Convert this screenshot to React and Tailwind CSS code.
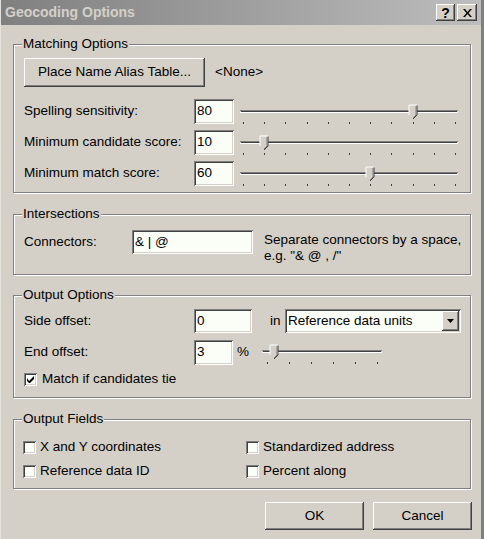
import React from "react";

// classic Win2k bevels
const raised =
  "bg-[#d4d0c8] shadow-[inset_-1px_-1px_0_#404040,inset_1px_1px_0_#ffffff,inset_-2px_-2px_0_#808080]";
const sunken =
  "bg-[#fbfdf7] shadow-[inset_1px_1px_0_#808080,inset_-1px_-1px_0_#ffffff,inset_2px_2px_0_#404040,inset_-2px_-2px_0_#d4d0c8]";

function Group({ title, className, children }) {
  return (
    <div
      className={`relative w-[458px] border border-[#808080] shadow-[inset_1px_1px_0_#ffffff,1px_1px_0_#ffffff] ${className}`}
    >
      <span className="absolute left-[8px] top-[-9px] bg-[#d4d0c8] px-[1px] leading-[16px]">
        {title}
      </span>
      {children}
    </div>
  );
}

function TextBox({ value, className }) {
  return (
    <div className={`${sunken} flex items-center pl-[3px] ${className}`}>
      {value}
    </div>
  );
}

function Checkbox({ checked }) {
  return (
    <div className={`${sunken} w-[13px] h-[13px] shrink-0 flex items-center justify-center`}>
      {checked && (
        <svg width="7" height="7" viewBox="0 0 7 7">
          <path d="M0 2v3l2 2h1l4-4V0L2 5z" fill="#000" />
        </svg>
      )}
    </div>
  );
}

// trackbar: channel, thumb pointing down, ticks below
function Slider({ width, height, pad, ticks, value, max }) {
  const span = width - pad * 2;
  const step = span / (ticks - 1);
  const tx = Math.round(pad + (value / max) * span);
  return (
    <svg width={width} height={height} className="shrink-0">
      <rect x="0" y="14" width={width} height="1" fill="#808080" />
      <rect x="1" y="15" width={width - 2} height="1" fill="#404040" />
      <rect x="0" y="16" width={width} height="1" fill="#ffffff" />
      {Array.from({ length: ticks }).map((_, i) => (
        <rect key={i} x={Math.round(pad + i * step)} y="26" width="1" height="2" fill="#404040" />
      ))}
      <polygon
        points={`${tx - 4},9 ${tx + 4},9 ${tx + 4},19 ${tx},23 ${tx - 4},19`}
        fill="#d4d0c8"
      />
      <polyline points={`${tx - 4},19 ${tx - 4},9 ${tx + 4},9`} fill="none" stroke="#ffffff" strokeWidth="1" />
      <polyline points={`${tx + 4},9.5 ${tx + 4},19 ${tx},23`} fill="none" stroke="#404040" strokeWidth="1" />
      <polyline points={`${tx + 3},10 ${tx + 3},19 ${tx},22`} fill="none" stroke="#808080" strokeWidth="1" />
    </svg>
  );
}

function SliderRow({ label, value }) {
  return (
    <div className="flex items-center h-[31px]">
      <span className="w-[170px]">{label}</span>
      <TextBox value={value} className="w-[40px] h-[25px]" />
      <div className="ml-[6px] self-start">
        <Slider width={218} height={31} pad={3} ticks={11} value={Number(value)} max={100} />
      </div>
    </div>
  );
}

export default function App() {
  return (
    <div className="w-[484px] h-[539px] overflow-hidden bg-[#d4d0c8] text-black text-[13.5px] font-['Liberation_Sans',Arial,sans-serif] border-l border-l-[#e4e2dc] border-r-[3px] border-r-[#808080] flex flex-col">
      {/* title bar */}
      <div className="h-[25px] shrink-0 flex items-center bg-linear-to-r from-[#808080] to-[#bdbdbd] pl-[4px] pr-[4px]">
        <span className="flex-1 text-[#d4d0c8] font-bold text-[14px]">Geocoding Options</span>
        <div className={`${raised} w-[19px] h-[17px] flex items-center justify-center font-bold text-[14px] leading-none`}>
          ?
        </div>
        <div className={`${raised} ml-[2px] w-[20px] h-[17px] flex items-center justify-center`}>
          <svg width="9" height="8" viewBox="0 0 9 8">
            <path d="M0 0h2l2.5 3L7 0h2L5.5 4 9 8H7L4.5 5 2 8H0l3.5-4z" fill="#000" />
          </svg>
        </div>
      </div>

      <div className="pl-[12px] pt-[19px] flex flex-col">
        {/* Matching Options */}
        <Group title="Matching Options" className="h-[149px] pl-[10px] pt-[13px]">
          <div className="flex items-center">
            <div className={`${raised} w-[181px] h-[29px] flex items-center justify-center`}>
              Place Name Alias Table...
            </div>
            <span className="ml-[10px]">&lt;None&gt;</span>
          </div>
          <div className="mt-[9px] flex flex-col">
            <SliderRow label="Spelling sensitivity:" value="80" />
            <SliderRow label="Minimum candidate score:" value="10" />
            <SliderRow label="Minimum match score:" value="60" />
          </div>
        </Group>

        {/* Intersections */}
        <Group title="Intersections" className="mt-[21px] h-[61px] pl-[10px] pt-[15px]">
          <div className="flex items-start">
            <span className="w-[108px] h-[24px] flex items-center">Connectors:</span>
            <TextBox value="& | @" className="w-[121px] h-[24px]" />
            <div className="ml-[11px] mt-[2px] leading-[16px] whitespace-nowrap">
              Separate connectors by a space,
              <br />
              e.g. "&amp; @ , /"
            </div>
          </div>
        </Group>

        {/* Output Options */}
        <Group title="Output Options" className="mt-[20px] h-[103px] pl-[10px] pt-[13px]">
          <div className="flex items-center h-[24px]">
            <span className="w-[170px]">Side offset:</span>
            <TextBox value="0" className="w-[58px] h-[24px]" />
            <span className="w-[33px] pl-[18px]">in</span>
            <div className={`${sunken} w-[176px] h-[24px] flex items-center pl-[3px] pr-[2px]`}>
              <span className="flex-1">Reference data units</span>
              <div className={`${raised} w-[17px] h-[20px] flex items-center justify-center`}>
                <svg width="7" height="4" viewBox="0 0 7 4">
                  <path d="M0 0h7L3.5 4z" fill="#000" />
                </svg>
              </div>
            </div>
          </div>
          <div className="mt-[7px] flex items-center h-[25px]">
            <span className="w-[170px]">End offset:</span>
            <TextBox value="3" className="w-[39px] h-[25px]" />
            <span className="w-[29px] pl-[4px]">%</span>
            <div className="self-start -mt-[4px]">
              <Slider width={120} height={31} pad={5} ticks={6} value={3} max={50} />
            </div>
          </div>
          <div className="mt-[8px] flex items-center h-[13px]">
            <Checkbox checked />
            <span className="ml-[5px]">Match if candidates tie</span>
          </div>
        </Group>

        {/* Output Fields */}
        <Group title="Output Fields" className="mt-[21px] h-[70px] pl-[9px] pt-[15px]">
          <div className="grid grid-cols-[223px_1fr]">
            <div className="flex items-center h-[24px]">
              <Checkbox />
              <span className="ml-[4px]">X and Y coordinates</span>
            </div>
            <div className="flex items-center h-[24px]">
              <Checkbox />
              <span className="ml-[4px]">Standardized address</span>
            </div>
            <div className="flex items-center h-[24px]">
              <Checkbox />
              <span className="ml-[4px]">Reference data ID</span>
            </div>
            <div className="flex items-center h-[24px]">
              <Checkbox />
              <span className="ml-[4px]">Percent along</span>
            </div>
          </div>
        </Group>

        {/* dialog buttons */}
        <div className="mt-[13px] w-[459px] flex justify-end gap-[9px]">
          <div className={`${raised} w-[99px] h-[28px] flex items-center justify-center`}>OK</div>
          <div className={`${raised} w-[99px] h-[28px] flex items-center justify-center`}>Cancel</div>
        </div>
      </div>
    </div>
  );
}
